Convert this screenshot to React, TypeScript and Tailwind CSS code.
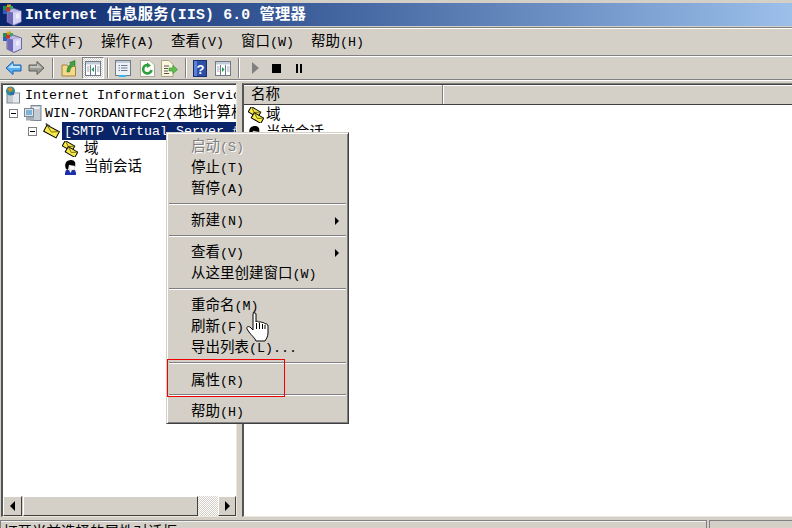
import React from 'react';

function Txt({ t, bold }: { t: string; bold?: boolean }) {
  const parts = t.match(/[\u4e00-\u9fff]+|[^\u4e00-\u9fff]+/g) || [];
  return (
    <span className={bold ? 'font-bold tracking-[0.2px]' : ''}>
      {parts.map((p, i) =>
        /[\u4e00-\u9fff]/.test(p) ? (
          <span key={i} className={bold ? 'text-[15.3px]' : 'text-[14.5px]'}>{p}</span>
        ) : (
          <span key={i} className={bold ? 'text-[14.8px]' : 'text-[13.33px]'}>{p}</span>
        ),
      )}
    </span>
  );
}

function MmcIcon() {
  return (
    <svg width="20" height="22" viewBox="0 0 20 22" className="shrink-0">
      <path d="M5 7 L11 4 L19.5 7 L19.5 18 L12 21.5 L5 18 Z" fill="#b9b6e0" stroke="#55538f" strokeWidth="0.8" />
      <path d="M11 8.5 L19 7 L19 17.5 L11 20.5 Z" fill="#d6d4f4" />
      <path d="M5.5 7.5 L11 8.5 L11 21 L5.5 18 Z" fill="#6f6ab8" />
      <path d="M14 10 L17.5 9.5 L17.5 14 L14 15 Z" fill="#ecebfb" />
      <rect x="1" y="2" width="4" height="4" fill="#1f8f4a" />
      <rect x="5" y="0.5" width="4" height="3" fill="#d9a21b" />
      <rect x="1" y="6" width="4" height="4" fill="#2b5fc0" />
      <rect x="4" y="3.5" width="4" height="4" fill="#c0392b" />
      <rect x="8" y="2" width="3" height="3" fill="#2fa86a" />
    </svg>
  );
}

function ArrowIcon({ left, blue }: { left?: boolean; blue?: boolean }) {
  return (
    <svg width="17" height="16" viewBox="0 0 17 16" className={left ? '' : '-scale-x-100'}>
      <path
        d="M1 8 L8 1.5 L8 5 L16 5 L16 11 L8 11 L8 14.5 Z"
        fill={blue ? '#55b0f0' : '#9a9a94'}
        stroke={blue ? '#1c5fb0' : '#5e5e5a'}
      />
      <path d="M3 8 L8 3.5 L8 6 L15 6 L15 8 Z" fill={blue ? '#bfe4fb' : '#c4c4be'} />
    </svg>
  );
}

function FolderUp() {
  return (
    <svg width="16" height="18" viewBox="0 0 16 18">
      <path d="M1 6 L6 6 L7 7.5 L14.5 7.5 L14.5 17 L1 17 Z" fill="#f3d98a" stroke="#a5843a" />
      <path d="M6 13 C6 8 8 6 10 5 L8.5 3.5 L14 1.5 L14 7 L12.5 6 C10.5 7.5 9 10 8.5 13 Z" fill="#3ca23c" stroke="#1f6b1f" strokeWidth="0.5" />
    </svg>
  );
}

function PaneIcon({ arrowLeft }: { arrowLeft?: boolean }) {
  return (
    <svg width="16" height="15" viewBox="0 0 16 15">
      <rect x="0.5" y="0.5" width="15" height="14" fill="#fff" stroke="#6d7c8c" />
      <rect x="1" y="1" width="14" height="2.5" fill="#c3ccd6" />
      <path d="M5.5 4 L5.5 14 M10.5 4 L10.5 14" stroke="#6d7c8c" />
      <path d="M12 6H14.5M12 8H14.5M12 10H14.5" stroke="#9aa6b2" />
      <path d="M2 6H4.5M2 8H4.5M2 10H4.5" stroke="#9aa6b2" />
      <path d={arrowLeft ? 'M9 6 L6.5 8.5 L9 11 Z' : 'M7 6 L9.5 8.5 L7 11 Z'} fill="#1f9a4a" />
    </svg>
  );
}

function PropsIcon() {
  return (
    <svg width="16" height="17" viewBox="0 0 16 17">
      <rect x="0.5" y="0.5" width="15" height="15" fill="#eef1f5" stroke="#6d7c8c" />
      <rect x="1" y="1" width="14" height="2" fill="#c3ccd6" />
      <path d="M3.5 5.5H5M6 5.5H12.5M3.5 8H5M6 8H12.5M3.5 10.5H5M6 10.5H12.5" stroke="#6a7a90" />
      <rect x="4" y="15" width="7" height="2" fill="#39b5e8" />
    </svg>
  );
}

function RefreshIcon() {
  return (
    <svg width="15" height="17" viewBox="0 0 15 17">
      <path d="M0.5 0.5 L10 0.5 L14.5 5 L14.5 16.5 L0.5 16.5 Z" fill="#fdfdf8" stroke="#a9a9a0" />
      <path d="M7.5 5 A4.2 4.2 0 1 0 11.5 10" fill="none" stroke="#2f9e3f" strokeWidth="2.6" />
      <path d="M7 2.5 L11 5.5 L7 8 Z" fill="#2f9e3f" />
    </svg>
  );
}

function ExportIcon() {
  return (
    <svg width="17" height="17" viewBox="0 0 17 17">
      <path d="M0.5 0.5 L8 0.5 L12 4.5 L12 16.5 L0.5 16.5 Z" fill="#fbf6dc" stroke="#a9a488" />
      <path d="M3 6H8M3 8.5H7M3 11H7M3 13.5H8" stroke="#555" />
      <path d="M8 8 L12 8 L12 5.5 L16.5 9.5 L12 13.5 L12 11 L8 11 Z" fill="#62c04a" stroke="#2d8a2d" strokeWidth="0.6" />
    </svg>
  );
}

function HelpIcon() {
  return (
    <svg width="14" height="17" viewBox="0 0 14 17">
      <rect x="0.5" y="0.5" width="13" height="16" fill="#2d4fa8" stroke="#15306f" />
      <rect x="1" y="1" width="3" height="15" fill="#5f7fd0" />
      <text x="7.5" y="13.5" textAnchor="middle" fontSize="13" fontWeight="bold" fill="#fff" fontFamily="Liberation Sans, sans-serif">?</text>
    </svg>
  );
}

function Envelope({ x = 0, y = 0 }: { x?: number; y?: number }) {
  return (
    <g transform={`translate(${x} ${y}) rotate(30 5.5 3)`}>
      <rect x="0" y="0" width="11" height="6" fill="#f8ea4c" stroke="#000" strokeWidth="1" />
      <path d="M0 0 L5.5 3.5 L11 0" fill="none" stroke="#6b6010" strokeWidth="0.8" />
    </g>
  );
}

function DomainIcon() {
  return (
    <svg width="16" height="16" viewBox="0 0 16 16" className="shrink-0">
      <Envelope x={1} y={2} />
      <Envelope x={4} y={8} />
    </svg>
  );
}

function SmtpIcon() {
  return (
    <svg width="17" height="16" viewBox="0 0 17 16" className="shrink-0">
      <path d="M3 0.5 L7 3 L4.5 5.5 Z" fill="#fff" stroke="#000" strokeWidth="0.7" />
      <g transform="translate(1.5 5) rotate(28 7 3.5)">
        <rect x="0" y="0" width="14" height="7" fill="#f8ea4c" stroke="#000" strokeWidth="1" />
        <path d="M0 0 L7 4 L14 0" fill="none" stroke="#6b6010" strokeWidth="0.8" />
      </g>
    </svg>
  );
}

function PersonIcon() {
  return (
    <svg width="13" height="15" viewBox="0 0 13 15" className="shrink-0">
      <path d="M1 13 L2 10 L11 10 L12 13 L12 15 L1 15 Z" fill="#1c2fa8" />
      <path d="M5 10 L8 10 L6.5 13 Z" fill="#fff" />
      <path d="M2 9 C0 4 2 0 7 0 C11 0 12 3 11 7 L5 5 L4 10 Z" fill="#000" />
      <path d="M5 5 L11 6 L10 10 L5.5 10 Z" fill="#fff" stroke="#888" strokeWidth="0.3" />
    </svg>
  );
}

function ServerIcon() {
  return (
    <svg width="18" height="17" viewBox="0 0 18 17" className="shrink-0">
      <rect x="7" y="0.5" width="10" height="15" fill="#c4cbd2" stroke="#7b8894" />
      <rect x="8.5" y="2" width="7" height="2" fill="#eef1f4" />
      <rect x="0.5" y="3.5" width="9" height="8" fill="#dfe4e8" stroke="#7b8894" />
      <rect x="2" y="5" width="6" height="5" fill="#7fb2d8" />
      <rect x="2" y="12" width="8" height="3.5" fill="#a3adb6" />
    </svg>
  );
}

function IisIcon() {
  return (
    <svg width="17" height="18" viewBox="0 0 17 18" className="shrink-0">
      <rect x="3" y="7" width="12.5" height="10" fill="#c6ccd2" stroke="#7b8894" />
      <rect x="9" y="7.5" width="6" height="9" fill="#e6e9ec" />
      <circle cx="6.5" cy="5" r="4.5" fill="#2a8f8f" />
      <path d="M3 3 L7 1 L9 4 L6 6 Z" fill="#d98a2b" />
      <path d="M6 7 L10 6 L10 9 L7 9 Z" fill="#3a62b8" />
    </svg>
  );
}

function Expander() {
  return (
    <span className="flex h-[9px] w-[9px] shrink-0 items-center justify-center border border-[#808080] bg-white">
      <span className="h-px w-[5px] bg-black" />
    </span>
  );
}

function TreeRow({ pad, children }: { pad: string; children: React.ReactNode }) {
  return <div className={`flex h-[18px] items-center whitespace-nowrap ${pad}`}>{children}</div>;
}

function MenuItem({ t, disabled, arrow }: { t: string; disabled?: boolean; arrow?: boolean }) {
  return (
    <div
      className={`flex h-[21px] items-center justify-between pl-[24px] pr-[9px] pt-[2px] ${
        disabled ? 'text-[#808080] [text-shadow:1px_1px_0_#fff]' : 'text-black'
      }`}
    >
      <Txt t={t} />
      {arrow && <span className="h-0 w-0 border-y-[4px] border-l-[4px] border-y-transparent border-l-black" />}
    </div>
  );
}

function MenuSep({ h }: { h: string }) {
  return (
    <div className={`flex flex-col justify-center px-[2px] ${h}`}>
      <div className="h-px bg-[#808080]" />
      <div className="h-px bg-white" />
    </div>
  );
}

function ToolSep() {
  return <div className="h-[20px] w-[2px] shrink-0 border-l border-[#808080] bg-white" />;
}

export default function App() {
  const menus = ['文件(F)', '操作(A)', '查看(V)', '窗口(W)', '帮助(H)'];

  return (
    <div className="relative flex h-[528px] w-[792px] flex-col overflow-hidden bg-[#d4d0c8] font-['Liberation_Mono','Noto_Sans_CJK_SC',monospace] text-black">
      <div className="h-[3px] shrink-0" />

      {/* title bar */}
      <div className="flex h-[23px] shrink-0 items-center bg-linear-to-r from-[#0a246a] to-[#9cc0ea] pl-[2px] text-white">
        <MmcIcon />
        <span className="ml-[3px]">
          <Txt bold t="Internet 信息服务(IIS) 6.0 管理器" />
        </span>
      </div>
      <div className="h-px shrink-0" />

      {/* menu bar */}
      <div className="flex h-[29px] shrink-0 items-center border-y border-y-[#808080] pl-[2px] shadow-[inset_0_1px_0_#fff]">
        <MmcIcon />
        <div className="ml-[9px] flex">
          {menus.map((m) => (
            <div key={m} className="w-[70px]">
              <Txt t={m} />
            </div>
          ))}
        </div>
      </div>

      {/* toolbar */}
      <div className="flex h-[24px] shrink-0 items-center border-b border-t border-b-[#808080] border-t-white pl-[5px]">
        <ArrowIcon left blue />
        <div className="ml-[6px]"><ArrowIcon /></div>
        <div className="ml-[7px]"><ToolSep /></div>
        <div className="ml-[7px]"><FolderUp /></div>
        <div className="ml-[5px] flex h-[22px] w-[22px] items-center justify-center border border-b-white border-l-[#808080] border-r-white border-t-[#808080] bg-[image:repeating-conic-gradient(#d4d0c8_0_25%,#ffffff_0_50%)] bg-size-[2px_2px]">
          <PaneIcon arrowLeft />
        </div>
        <div className="ml-[3px]"><ToolSep /></div>
        <div className="ml-[6px]"><PropsIcon /></div>
        <div className="ml-[9px]"><RefreshIcon /></div>
        <div className="ml-[6px]"><ExportIcon /></div>
        <div className="ml-[7px]"><ToolSep /></div>
        <div className="ml-[6px]"><HelpIcon /></div>
        <div className="ml-[8px]"><PaneIcon /></div>
        <div className="ml-[7px]"><ToolSep /></div>
        <span className="ml-[12px] h-0 w-0 border-y-[6px] border-l-[7px] border-y-transparent border-l-[#808080]" />
        <span className="ml-[13px] h-[9px] w-[9px] bg-black" />
        <div className="ml-[15px] flex gap-[2px]">
          <span className="h-[9px] w-[2px] bg-black" />
          <span className="h-[9px] w-[2px] bg-black" />
        </div>
      </div>
      <div className="h-px shrink-0 bg-white" />

      {/* panes */}
      <div className="flex h-[439px] shrink-0 pb-[3px] pl-px pt-[2px]">
        <div className="flex w-[236px] shrink-0 flex-col border-b border-l-2 border-r border-t border-b-[#ece9d8] border-l-[#555] border-r-[#ece9d8] border-t-[#808080]">
          <div className="min-h-0 flex-1 overflow-hidden border-t border-t-[#404040] bg-white pt-px">
            <TreeRow pad="pl-px">
              <IisIcon />
              <span className="ml-[4px]"><Txt t="Internet Information Services" /></span>
            </TreeRow>
            <TreeRow pad="pl-[6px]">
              <Expander />
              <span className="ml-[6px]" />
              <ServerIcon />
              <span className="ml-[3px]"><Txt t="WIN-7ORDANTFCF2(本地计算机)" /></span>
            </TreeRow>
            <TreeRow pad="pl-[25px]">
              <Expander />
              <span className="ml-[6px]" />
              <SmtpIcon />
              <span className="ml-[2px] flex h-[18px] flex-1 items-center bg-[#0a246a] pl-[2px] text-white">
                <Txt t="[SMTP Virtual Server #1]" />
              </span>
            </TreeRow>
            <TreeRow pad="pl-[59px]">
              <DomainIcon />
              <span className="ml-[6px]"><Txt t="域" /></span>
            </TreeRow>
            <TreeRow pad="pl-[61px]">
              <PersonIcon />
              <span className="ml-[7px]"><Txt t="当前会话" /></span>
            </TreeRow>
          </div>

          {/* horizontal scrollbar */}
          <div className="flex h-[20px] shrink-0">
            <div className="flex w-[19px] items-center justify-center border border-b-[#404040] border-l-white border-r-[#404040] border-t-white bg-[#d4d0c8]">
              <span className="h-0 w-0 border-y-[5px] border-r-[5px] border-y-transparent border-r-black" />
            </div>
            <div className="ml-px w-[175px] border border-b-[#404040] border-l-white border-r-[#404040] border-t-white" />
            <div className="w-[20px] bg-[image:repeating-conic-gradient(#d4d0c8_0_25%,#ffffff_0_50%)] bg-size-[2px_2px]" />
            <div className="flex w-[18px] items-center justify-center border border-b-[#404040] border-l-white border-r-[#404040] border-t-white">
              <span className="h-0 w-0 border-y-[5px] border-l-[5px] border-y-transparent border-l-black" />
            </div>
          </div>
        </div>

        <div className="ml-[5px] flex min-w-0 flex-1 flex-col border-b border-l-2 border-t border-b-[#ece9d8] border-l-[#555] border-t-[#808080] bg-white">
          <div className="flex h-[21px] shrink-0 border-b border-t border-b-[#404040] border-t-[#404040] bg-[#d4d0c8]">
            <div className="flex w-[199px] items-center border-r border-r-[#808080] pl-[7px] shadow-[inset_0_1px_0_#fff]">
              <Txt t="名称" />
            </div>
            <div className="flex-1 border-l border-l-white shadow-[inset_0_1px_0_#fff]" />
          </div>
          <div className="pl-[4px] pt-px">
            <div className="flex h-[18px] items-center">
              <DomainIcon />
              <span className="ml-[2px]"><Txt t="域" /></span>
            </div>
            <div className="flex h-[18px] items-center">
              <PersonIcon />
              <span className="ml-[5px]"><Txt t="当前会话" /></span>
            </div>
          </div>
        </div>
      </div>

      {/* status bar, cut off by the bottom of the window */}
      <div className="flex h-[24px] shrink-0">
        <div className="w-[707px] border-l border-r border-t border-l-[#808080] border-r-[#808080] border-t-[#808080] pl-[2px] shadow-[inset_0_1px_0_#f4f2ec]">
          <Txt t="打开当前选择的属性对话框" />
        </div>
        <div className="ml-[2px] flex-1 border-l border-t border-l-[#808080] border-t-[#808080]" />
      </div>

      {/* context menu */}
      <div className="absolute left-[166px] top-[132px] w-[183px] border border-b-[#404040] border-l-[#d4d0c8] border-r-[#404040] border-t-[#d4d0c8] bg-[#d4d0c8] py-[2px] shadow-[inset_1px_1px_0_#fff,inset_-1px_-1px_0_#808080]">
        <MenuItem t="启动(S)" disabled />
        <MenuItem t="停止(T)" />
        <MenuItem t="暂停(A)" />
        <MenuSep h="h-[11px]" />
        <MenuItem t="新建(N)" arrow />
        <MenuSep h="h-[11px]" />
        <MenuItem t="查看(V)" arrow />
        <MenuItem t="从这里创建窗口(W)" />
        <MenuSep h="h-[11px]" />
        <MenuItem t="重命名(M)" />
        <MenuItem t="刷新(F)" />
        <MenuItem t="导出列表(L)..." />
        <MenuSep h="h-[12px]" />
        <MenuItem t="属性(R)" />
        <MenuSep h="h-[10px]" />
        <MenuItem t="帮助(H)" />
      </div>

      {/* red annotation box */}
      <div className="absolute left-[167px] top-[359px] h-[38px] w-[118px] border border-[#f00000]" />

      {/* hand cursor */}
      <svg className="absolute left-[246px] top-[312px]" width="23" height="30" viewBox="0 0 23 30">
        <path
          d="M7 2 C7 0.5 10 0.5 10 2 L10 10 C10 9 13 9 13 10.5 C13 9.5 16 9.5 16 11 C16 10 19 10.5 19 12 C20 11.5 22 12 22 14 L22 21 C22 25 20 27 19 29 L10 29 C9 26 6 24 3 20 L1 17 C0 15 2 14 4 15 L7 18 Z"
          fill="#fff"
          stroke="#000"
          strokeWidth="1"
        />
        <path d="M10.5 11 L10.5 17 M13.5 11 L13.5 17 M16.5 12 L16.5 17 M19 13 L19 17" stroke="#000" strokeWidth="1" />
      </svg>
    </div>
  );
}
